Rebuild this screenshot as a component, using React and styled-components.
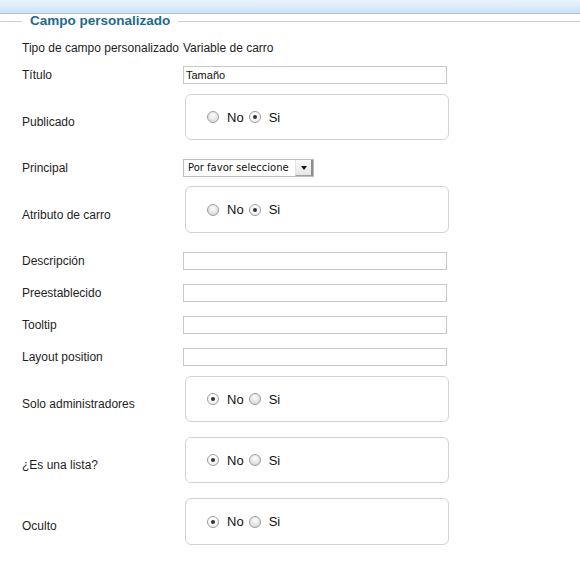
import React from "react";
import styled, { createGlobalStyle } from "styled-components";

const Global = createGlobalStyle`
  html, body { margin: 0; padding: 0; background: #fff; }
  body { font-family: "Liberation Sans", Arial, sans-serif; color: #1e1e1e; overflow: hidden; }
`;

const Page = styled.div`
  width: 580px;
  height: 566px;
  overflow: hidden;
  background: #fff;
`;

const TopBar = styled.div`
  height: 13px;
  background: linear-gradient(#e9f3fc, #cbe3f8);
  border-bottom: 1px solid #b9c2ca;
`;

const Fieldset = styled.fieldset`
  margin: 0 0 0 -5px;
  padding: 0 0 40px 26px;
  width: 620px;
  border: 1px solid #cfcfcf;
  border-radius: 7px;
  min-width: 0;
`;

const Legend = styled.legend`
  margin-left: 0;
  padding: 0 8px;
  font-size: 13.5px;
  line-height: 14px;
  font-weight: bold;
  color: #1c6a92;
`;

const Grid = styled.div`
  display: grid;
  grid-template-columns: 161px 1fr;
  padding-top: 9px;
`;

const Row = styled.div`
  display: contents;
`;

const Label = styled.div`
  height: ${(p) => p.$h}px;
  display: flex;
  align-items: center;
  font-size: 12px;
  white-space: nowrap;
  color: #1e1e1e;
`;

const Cell = styled.div`
  height: ${(p) => p.$h}px;
  display: flex;
  align-items: ${(p) => (p.$top ? "flex-start" : "center")};
  font-size: 12px;
`;

const TextInput = styled.div`
  box-sizing: border-box;
  width: 264px;
  height: 18px;
  border: 1px solid #c9c9c9;
  background: #fff;
  font-size: 11px;
  line-height: 16px;
  padding-left: 2px;
  color: #111;
`;

const Select = styled.div`
  box-sizing: border-box;
  width: 131px;
  height: 18px;
  border: 1px solid #bdbdbd;
  background: #fff;
  display: flex;
  align-items: stretch;
`;

const SelectText = styled.span`
  flex: 1;
  overflow: hidden;
  font-family: "DejaVu Sans", sans-serif;
  font-size: 10px;
  line-height: 16px;
  padding-left: 4px;
  color: #111;
  white-space: nowrap;
`;

const SelectArrow = styled.span`
  width: 15px;
  border-left: 1px solid #e4e4e4;
  border-right: 2px solid #8c8c8c;
  border-bottom: 1px solid #a0a0a0;
  background: linear-gradient(#fafafa, #e6e6e6);
  display: flex;
  align-items: center;
  justify-content: center;
  &::after {
    content: "";
    border-left: 3px solid transparent;
    border-right: 3px solid transparent;
    border-top: 4px solid #111;
  }
`;

const RadioBox = styled.div`
  box-sizing: border-box;
  margin: ${(p) => p.$mt}px 0 0 2px;
  width: 264px;
  height: ${(p) => p.$bh}px;
  border: 1px solid #d3d3d3;
  border-radius: 6px;
  display: flex;
  align-items: center;
  padding-left: 21px;
  font-size: 13px;
  color: #111;
`;

const Radio = styled.span`
  box-sizing: border-box;
  width: 12px;
  height: 12px;
  border-radius: 50%;
  border: 1px solid #9c9c9c;
  margin-left: ${(p) => (p.$first ? 0 : 5)}px;
  margin-right: 8px;
  display: flex;
  align-items: center;
  justify-content: center;
  background: ${(p) =>
    p.$checked
      ? "linear-gradient(#ffffff, #f1f1f1)"
      : "radial-gradient(circle at 50% 35%, #fdfdfd 0%, #e2e2e2 60%, #cfcfcf 100%)"};
  &::after {
    content: "";
    display: ${(p) => (p.$checked ? "block" : "none")};
    width: 4px;
    height: 4px;
    border-radius: 50%;
    background: #333;
  }
`;

const RadioGroup = ({ value, mt = 3, bh = 46 }) => (
  <RadioBox $mt={mt} $bh={bh}>
    <Radio $first $checked={value === "no"} />
    No
    <Radio $checked={value === "si"} />
    Si
  </RadioBox>
);

const rows = [
  { label: "Título", kind: "input", value: "Tamaño" },
  { label: "Publicado", kind: "radio", value: "si", mt: 3, bh: 46 },
  { label: "Principal", kind: "select" },
  { label: "Atributo de carro", kind: "radio", value: "si", mt: 2, bh: 47 },
  { label: "Descripción", kind: "input", value: "" },
  { label: "Preestablecido", kind: "input", value: "" },
  { label: "Tooltip", kind: "input", value: "" },
  { label: "Layout position", kind: "input", value: "" },
  { label: "Solo administradores", kind: "radio", value: "no", mt: 3, bh: 46 },
  { label: "¿Es una lista?", kind: "radio", value: "no", mt: 3, bh: 46 },
  { label: "Oculto", kind: "radio", value: "no", mt: 3, bh: 47 },
];

export default function App() {
  return (
    <Page>
      <Global />
      <TopBar />
      <Fieldset>
        <Legend>Campo personalizado</Legend>
        <Grid>
          <Row>
            <Label $h={22}>Tipo de campo personalizado</Label>
            <Cell $h={22}>Variable de carro</Cell>
          </Row>
          {rows.map((r) => {
            const h = r.kind === "radio" ? 61 : 32;
            return (
              <Row key={r.label}>
                <Label $h={h}>{r.label}</Label>
                <Cell $h={h} $top={r.kind === "radio"}>
                  {r.kind === "input" && <TextInput>{r.value}</TextInput>}
                  {r.kind === "select" && (
                    <Select>
                      <SelectText>Por favor seleccione</SelectText>
                      <SelectArrow />
                    </Select>
                  )}
                  {r.kind === "radio" && <RadioGroup value={r.value} mt={r.mt} bh={r.bh} />}
                </Cell>
              </Row>
            );
          })}
        </Grid>
      </Fieldset>
    </Page>
  );
}
